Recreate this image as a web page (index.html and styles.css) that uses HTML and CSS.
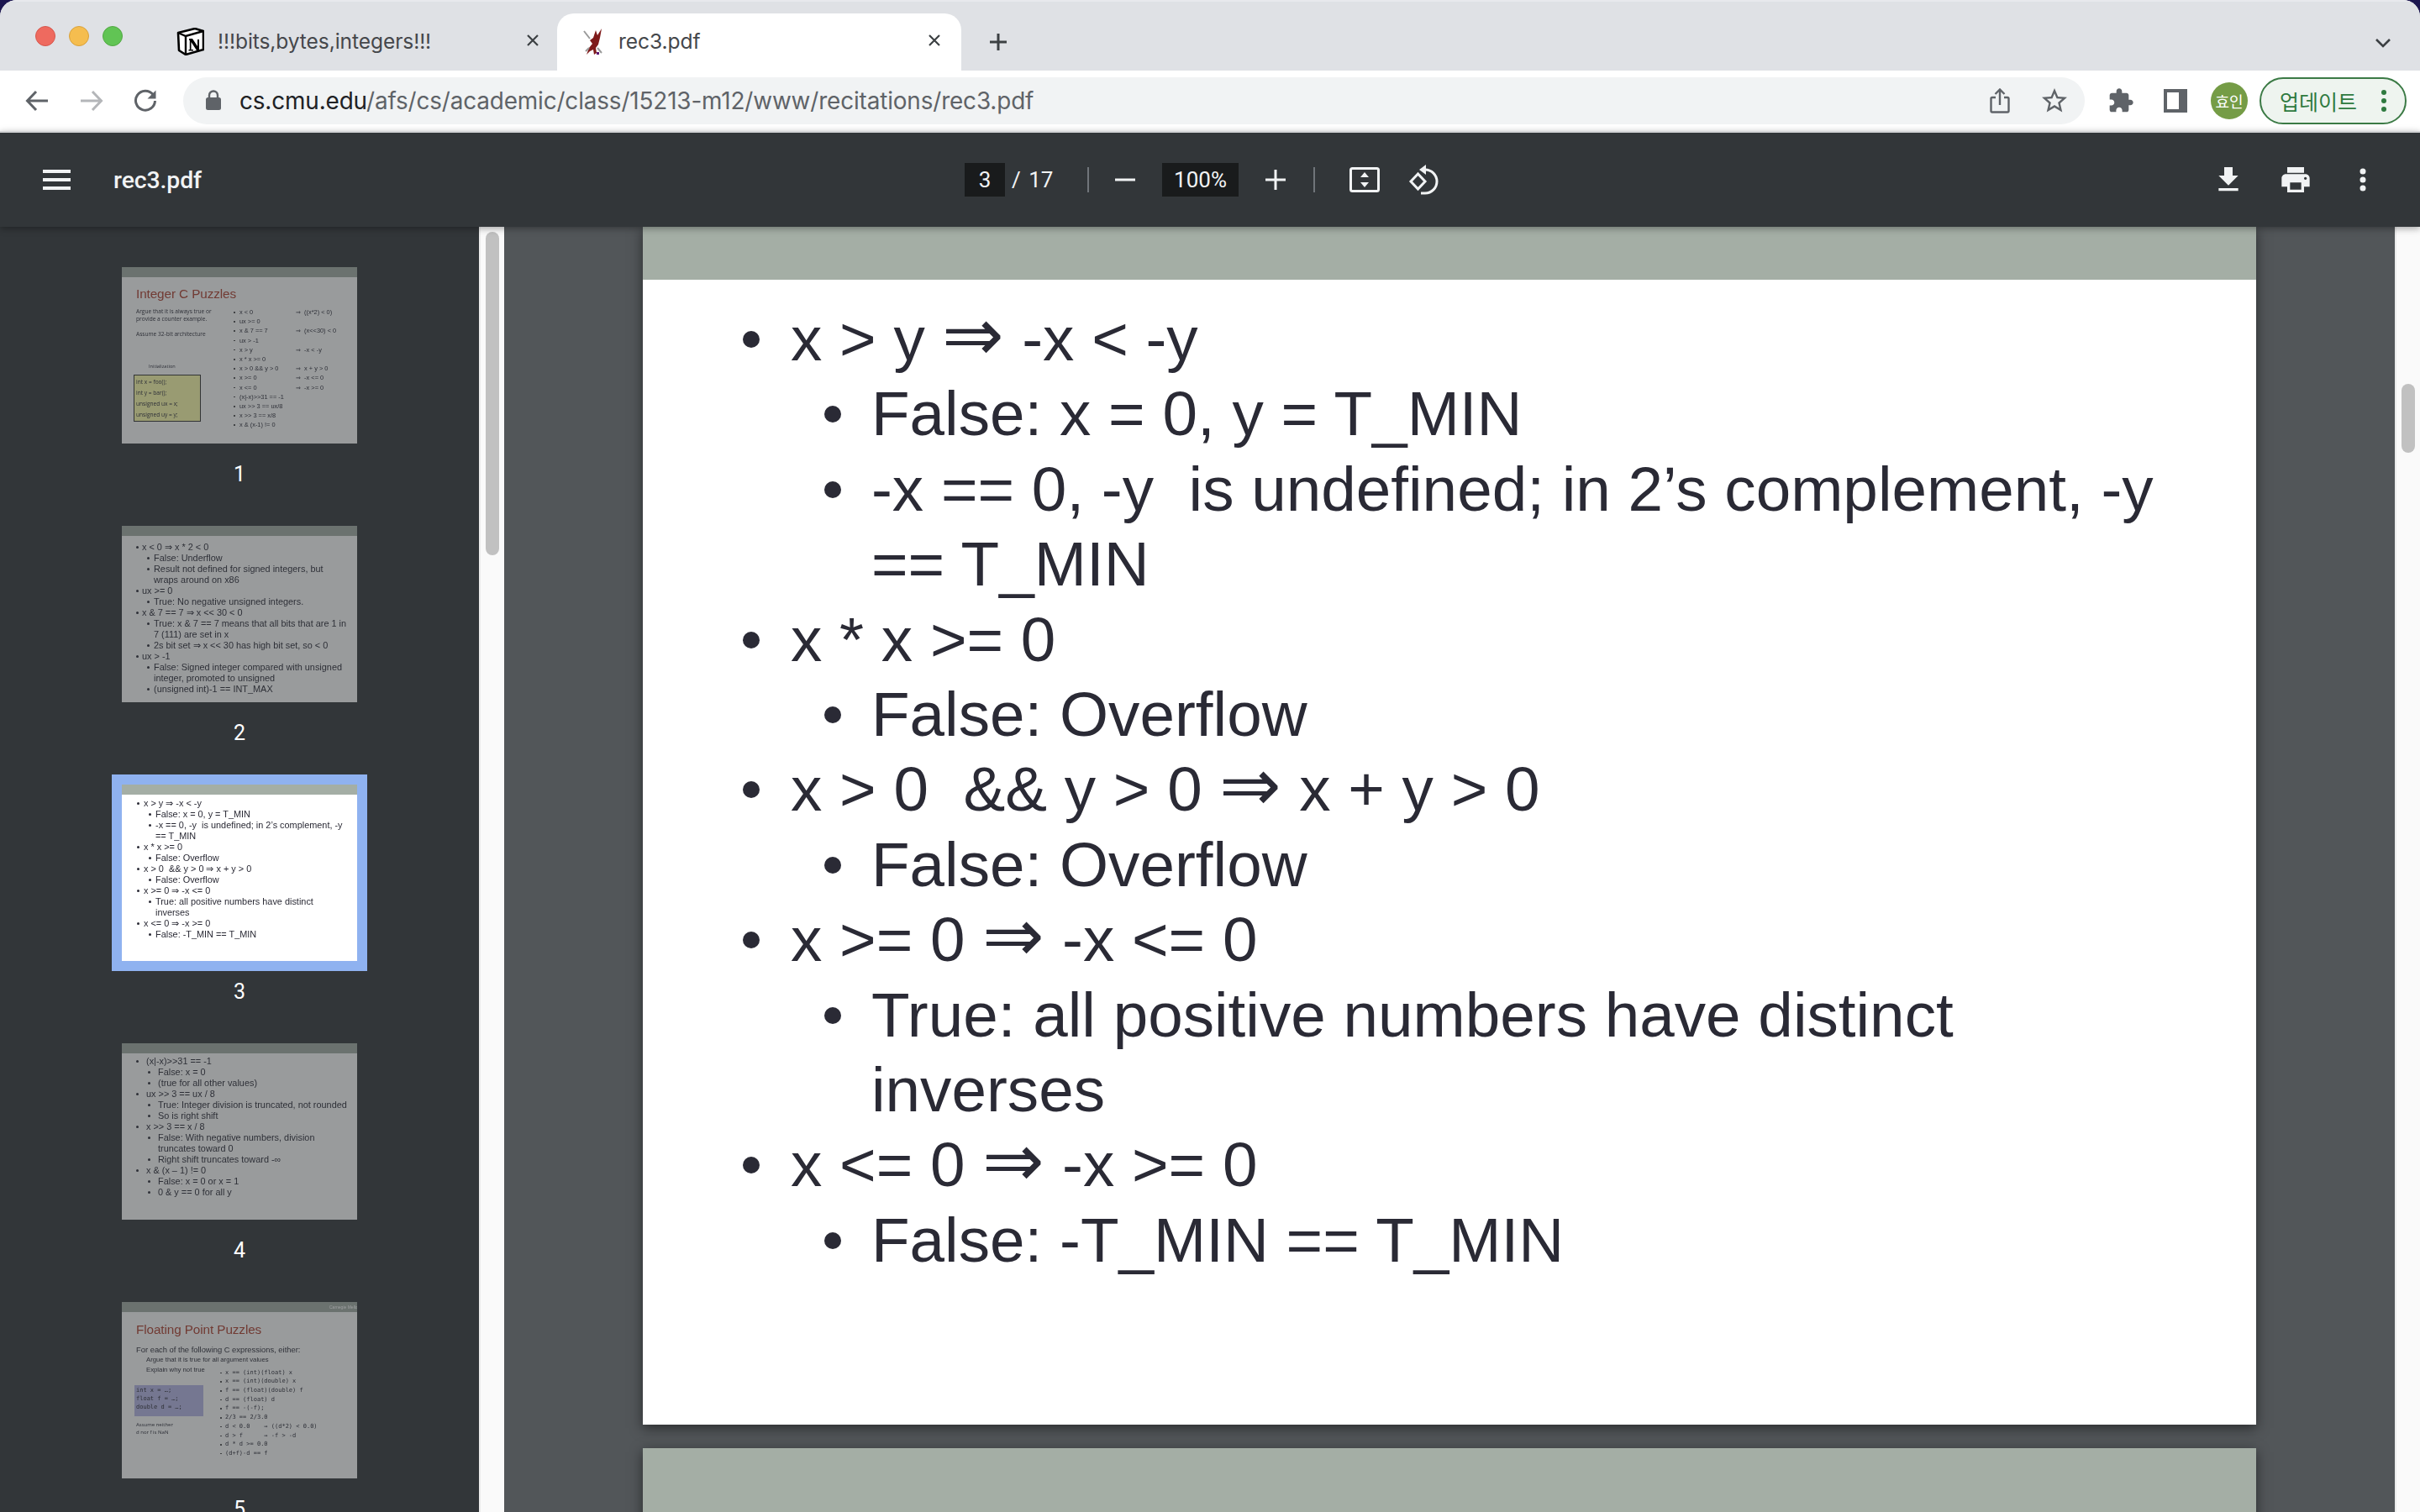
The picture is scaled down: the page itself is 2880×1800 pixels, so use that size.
FILE: index.html
```html
<!DOCTYPE html>
<html lang="en">
<head>
<meta charset="utf-8">
<title>rec3.pdf</title>
<link rel="stylesheet" href="styles.css">
</head>
<body>
<div class="window">
  <div class="tabstrip">
    <div class="lights"><i class="light red"></i><i class="light yellow"></i><i class="light green"></i></div>
    <div class="tab">
      <svg class="fav" viewBox="0 0 33 33"><path d="M2 6 L22 1 L32 4 L32 26 L11 32 L3 27 Z" fill="#fff" stroke="#000" stroke-width="2.6" stroke-linejoin="round"/><path d="M2 6 L11 10 L32 4 M11 10 L11 32" fill="none" stroke="#000" stroke-width="2.4"/><path d="M15 13 H19 L25 22 V14 H27 V27 H24 L17.5 17 V26 H20 V27.5 H14.5 V26 H15.8 V15 H15 Z" fill="#000"/></svg>
      <span class="tab-title">!!!bits,bytes,integers!!!</span>
      <svg class="tab-x" viewBox="0 0 16 16"><path d="M2 2 L14 14 M14 2 L2 14" stroke="#3c4043" stroke-width="2.2" fill="none"/></svg>
    </div>
    <div class="tab active">
      <svg class="griffin" viewBox="0 0 26 33"><path d="M5 32 L8 24 L12 19 L9 15 L13 12 L16 3 L18 9 L23 1 L21 12 L19 20 L16 24 L17 30 L14 32 L13 26 L9 28 Z" fill="#7e1a1a"/><path d="M2 4 L9 13 M4 28 L8 24 M18 24 L23 30" stroke="#9a9a9a" stroke-width="2" fill="none"/><path d="M17 29 h3 v3 h-3z" fill="#5a1170"/></svg>
      <span class="tab-title">rec3.pdf</span>
      <svg class="tab-x" viewBox="0 0 16 16"><path d="M2 2 L14 14 M14 2 L2 14" stroke="#3c4043" stroke-width="2.2" fill="none"/></svg>
    </div>
    <svg class="newtab" viewBox="0 0 24 24"><path d="M12 2 V22 M2 12 H22" stroke="#3c4043" stroke-width="3" fill="none"/></svg>
    <svg class="chev" viewBox="0 0 20 12"><path d="M2 2 L10 10 L18 2" stroke="#3c4043" stroke-width="2.6" fill="none"/></svg>
  </div>

  <div class="toolbar">
    <svg class="nav back" viewBox="0 0 28 28"><path d="M27 14 H3 M13 3 L2.5 14 L13 25" stroke="#5f6368" stroke-width="3" fill="none"/></svg>
    <svg class="nav fwd" viewBox="0 0 28 28"><path d="M1 14 H25 M15 3 L25.5 14 L15 25" stroke="#b4b6b9" stroke-width="3" fill="none"/></svg>
    <svg class="nav reload" viewBox="0 0 28 28"><path d="M23 6.5 A11.5 11.5 0 1 0 25.5 14" stroke="#5f6368" stroke-width="3" fill="none"/><path d="M26.5 1.5 V11.5 H16.5 Z" fill="#5f6368"/></svg>
    <div class="omnibox">
      <svg class="lock" viewBox="0 0 20 24"><path d="M5 10 V6.5 a5 5 0 0 1 10 0 V10" stroke="#5f6368" stroke-width="2.4" fill="none"/><rect x="1" y="9" width="18" height="15" rx="2.5" fill="#5f6368"/></svg>
      <span class="url"><b>cs.cmu.edu</b>/afs/cs/academic/class/15213-m12/www/recitations/rec3.pdf</span>
      <svg class="share" viewBox="0 0 24 30"><path d="M7 11 H3 a1.5 1.5 0 0 0 -1.5 1.5 V27 a1.5 1.5 0 0 0 1.5 1.5 H21 a1.5 1.5 0 0 0 1.5 -1.5 V12.5 A1.5 1.5 0 0 0 21 11 H17 M12 20 V2 M6.5 7 L12 1.5 L17.5 7" stroke="#5f6368" stroke-width="2.4" fill="none"/></svg>
      <svg class="star" viewBox="0 0 24 24"><path fill="#5f6368" d="M22 9.24l-7.19-.62L12 2 9.19 8.63 2 9.24l5.46 4.73L5.82 21 12 17.27 18.18 21l-1.63-7.03L22 9.24zM12 15.4l-3.76 2.27 1-4.28-3.32-2.88 4.38-.38L12 6.1l1.71 4.04 4.38.38-3.32 2.88 1 4.28L12 15.4z"/></svg>
    </div>
    <svg class="puzzle" viewBox="0 0 24 24"><path fill="#5f6368" d="M20.5 11H19V7c0-1.1-.9-2-2-2h-4V3.5C13 2.12 11.88 1 10.5 1S8 2.12 8 3.5V5H4c-1.1 0-1.99.9-1.99 2v3.8H3.5c1.49 0 2.7 1.21 2.7 2.7s-1.21 2.7-2.7 2.7H2V20c0 1.1.9 2 2 2h3.8v-1.5c0-1.49 1.21-2.7 2.7-2.7 1.49 0 2.7 1.21 2.7 2.7V22H17c1.1 0 2-.9 2-2v-4h1.5c1.38 0 2.5-1.12 2.5-2.5S21.88 11 20.5 11z"/></svg>
    <svg class="panel" viewBox="0 0 28 28"><path d="M0 0 H28 V28 H0 Z M4 4 V24 H18 V4 Z" fill="#5f6368" fill-rule="evenodd"/></svg>
    <div class="avatar">효인</div>
    <div class="update"><span>업데이트</span><svg class="update-dots" viewBox="0 0 8 28"><circle cx="4" cy="4" r="3" fill="#2f7a3f"/><circle cx="4" cy="14" r="3" fill="#2f7a3f"/><circle cx="4" cy="24" r="3" fill="#2f7a3f"/></svg></div>
  </div>

  <div class="pdfbar">
    <div class="pdf-left">
      <svg class="burger" viewBox="0 0 33 24"><path d="M0 0 H33 V4 H0 Z M0 10 H33 V14 H0 Z M0 20 H33 V24 H0 Z" fill="#f1f3f4"/></svg>
      <span class="pdf-title">rec3.pdf</span>
    </div>
    <div class="pdf-center">
      <span class="field pagefield">3</span>
      <span class="pagecount">/ 17</span>
      <i class="vsep first"></i>
      <svg class="zoombtn minus" viewBox="0 0 24 24"><path d="M0 12 H24" stroke="#f1f3f4" stroke-width="3" fill="none"/></svg>
      <span class="field zoomfield">100%</span>
      <svg class="zoombtn plus" viewBox="0 0 24 24"><path d="M0 12 H24 M12 0 V24" stroke="#f1f3f4" stroke-width="3" fill="none"/></svg>
      <i class="vsep second"></i>
      <svg class="fit" viewBox="0 0 36 30"><rect x="1.5" y="1.5" width="33" height="27" rx="2" stroke="#f1f3f4" stroke-width="3" fill="none"/><path d="M18 6 L23 12 H13 Z M18 24 L23 18 H13 Z" fill="#f1f3f4"/></svg>
      <svg class="rotate" viewBox="0 0 36 36"><path d="M11.5 11 L3 20 L11.5 29 L20 20 Z" stroke="#f1f3f4" stroke-width="3" fill="none"/><path d="M17 6 H20 A14 14 0 0 1 20 34 H15" stroke="#f1f3f4" stroke-width="3" fill="none"/><path d="M21 0 V12 L13 6 Z" fill="#f1f3f4"/></svg>
    </div>
    <div class="pdf-right">
      <svg class="act" viewBox="0 0 24 24"><path fill="#f1f3f4" d="M19 9h-4V3H9v6H5l7 7 7-7zM5 18v2h14v-2H5z"/></svg>
      <svg class="act" viewBox="0 0 24 24"><path fill="#f1f3f4" d="M19 8H5c-1.66 0-3 1.34-3 3v6h4v4h12v-4h4v-6c0-1.66-1.34-3-3-3zm-3 11H8v-5h8v5zm3-7c-.55 0-1-.45-1-1s.45-1 1-1 1 .45 1 1-.44 1-1 1zm-1-9H6v4h12V3z"/></svg>
      <svg class="act" viewBox="0 0 24 24"><circle cx="12" cy="6" r="2.1" fill="#f1f3f4"/><circle cx="12" cy="12" r="2.1" fill="#f1f3f4"/><circle cx="12" cy="18" r="2.1" fill="#f1f3f4"/></svg>
    </div>
  </div>

  <div class="content">
    <aside class="sidebar">
      <div class="thumb-item">
        <div class="slide dim">
          <div class="sband"></div>
          <div class="s1">
            <div class="stitle">Integer C Puzzles</div>
            <div class="s1-cols">
              <div class="s1-left">
                <p>Argue that it is always true or<br>provide a counter example.</p>
                <p class="mt">Assume 32-bit architecture</p>
                <p class="init">Initialization</p>
                <div class="codebox">
                  <span>int x = foo();</span><span>int y = bar();</span><span>unsigned ux = x;</span><span>unsigned uy = y;</span>
                </div>
              </div>
              <div class="s1-right">
                <div class="p"><span>x &lt; 0</span><span>⇒&nbsp;&nbsp;((x*2) &lt; 0)</span></div>
                <div class="p"><span>ux &gt;= 0</span></div>
                <div class="p"><span>x &amp; 7 == 7</span><span>⇒&nbsp;&nbsp;(x&lt;&lt;30) &lt; 0</span></div>
                <div class="p"><span>ux &gt; -1</span></div>
                <div class="p"><span>x &gt; y</span><span>⇒&nbsp;&nbsp;-x &lt; -y</span></div>
                <div class="p"><span>x * x &gt;= 0</span></div>
                <div class="p"><span>x &gt; 0 &amp;&amp; y &gt; 0</span><span>⇒&nbsp;&nbsp;x + y &gt; 0</span></div>
                <div class="p"><span>x &gt;= 0</span><span>⇒&nbsp;&nbsp;-x &lt;= 0</span></div>
                <div class="p"><span>x &lt;= 0</span><span>⇒&nbsp;&nbsp;-x &gt;= 0</span></div>
                <div class="p"><span>(x|-x)&gt;&gt;31 == -1</span></div>
                <div class="p"><span>ux &gt;&gt; 3 == ux/8</span></div>
                <div class="p"><span>x &gt;&gt; 3 == x/8</span></div>
                <div class="p"><span>x &amp; (x-1) != 0</span></div>
              </div>
            </div>
          </div>
        </div>
        <div class="thumb-label">1</div>
      </div>

      <div class="thumb-item">
        <div class="slide dim">
          <div class="sband"></div>
          <div class="tlist t2">
            <div class="tb1">x &lt; 0 ⇒ x * 2 &lt; 0</div>
            <div class="tb2">False: Underflow</div>
            <div class="tb2">Result not defined for signed integers, but wraps around on x86</div>
            <div class="tb1">ux &gt;= 0</div>
            <div class="tb2">True: No negative unsigned integers.</div>
            <div class="tb1">x &amp; 7 == 7 ⇒ x &lt;&lt; 30 &lt; 0</div>
            <div class="tb2">True: x &amp; 7 == 7 means that all bits that are 1 in 7 (111) are set in x</div>
            <div class="tb2">2s bit set ⇒ x &lt;&lt; 30 has high bit set, so &lt; 0</div>
            <div class="tb1">ux &gt; -1</div>
            <div class="tb2">False: Signed integer compared with unsigned integer, promoted to unsigned</div>
            <div class="tb2">(unsigned int)-1 == INT_MAX</div>
          </div>
        </div>
        <div class="thumb-label">2</div>
      </div>

      <div class="thumb-item">
        <div class="slide selected">
          <div class="sband"></div>
          <div class="tlist t3">
            <div class="tb1">x &gt; y ⇒ -x &lt; -y</div>
            <div class="tb2">False: x = 0, y = T_MIN</div>
            <div class="tb2">-x == 0, -y  is undefined; in 2’s complement, -y == T_MIN</div>
            <div class="tb1">x * x &gt;= 0</div>
            <div class="tb2">False: Overflow</div>
            <div class="tb1">x &gt; 0  &amp;&amp; y &gt; 0 ⇒ x + y &gt; 0</div>
            <div class="tb2">False: Overflow</div>
            <div class="tb1">x &gt;= 0 ⇒ -x &lt;= 0</div>
            <div class="tb2">True: all positive numbers have distinct inverses</div>
            <div class="tb1">x &lt;= 0 ⇒ -x &gt;= 0</div>
            <div class="tb2">False: -T_MIN == T_MIN</div>
          </div>
        </div>
        <div class="thumb-label">3</div>
      </div>

      <div class="thumb-item">
        <div class="slide dim">
          <div class="sband"></div>
          <div class="tlist t4">
            <div class="tb1">(x|-x)&gt;&gt;31 == -1</div>
            <div class="tb2">False: x = 0</div>
            <div class="tb2">(true for all other values)</div>
            <div class="tb1">ux &gt;&gt; 3 == ux / 8</div>
            <div class="tb2">True: Integer division is truncated, not rounded</div>
            <div class="tb2">So is right shift</div>
            <div class="tb1">x &gt;&gt; 3 == x / 8</div>
            <div class="tb2">False: With negative numbers, division truncates toward 0</div>
            <div class="tb2">Right shift truncates toward -∞</div>
            <div class="tb1">x &amp; (x – 1) != 0</div>
            <div class="tb2">False: x = 0 or x = 1</div>
            <div class="tb2">0 &amp; y == 0 for all y</div>
          </div>
        </div>
        <div class="thumb-label">4</div>
      </div>

      <div class="thumb-item">
        <div class="slide dim">
          <div class="sband band5"><span>Carnegie Mellon</span></div>
          <div class="s5">
            <div class="stitle">Floating Point Puzzles</div>
            <div class="s5-lead">For each of the following C expressions, either:</div>
            <div class="s5-sub">Argue that it is true for all argument values</div>
            <div class="s5-sub">Explain why not true</div>
            <div class="s5-cols">
              <div class="s5-left">
                <div class="fbox"><span>int x = …;</span><span>float f = …;</span><span>double d = …;</span></div>
                <p>Assume neither<br>d nor f is NaN</p>
              </div>
              <div class="s5-right">
                <span>x == (int)(float) x</span><span>x == (int)(double) x</span><span>f == (float)(double) f</span><span>d == (float) d</span><span>f == -(-f);</span><span>2/3 == 2/3.0</span><span>d &lt; 0.0    ⇒ ((d*2) &lt; 0.0)</span><span>d &gt; f      ⇒ -f &gt; -d</span><span>d * d &gt;= 0.0</span><span>(d+f)-d == f</span>
              </div>
            </div>
          </div>
        </div>
        <div class="thumb-label">5</div>
      </div>
    </aside>
    <div class="sbar left-sbar"><i class="sthumb"></i></div>
    <main class="viewer">
      <div class="page">
        <div class="band"></div>
        <div class="bullets">
          <div class="b1">x &gt; y <span class="ar">⇒</span> -x &lt; -y</div>
          <div class="b2">False: x = 0, y = T_MIN</div>
          <div class="b2">-x == 0, -y  is undefined; in 2’s complement, -y == T_MIN</div>
          <div class="b1">x * x &gt;= 0</div>
          <div class="b2">False: Overflow</div>
          <div class="b1">x &gt; 0  &amp;&amp; y &gt; 0 <span class="ar">⇒</span> x + y &gt; 0</div>
          <div class="b2">False: Overflow</div>
          <div class="b1">x &gt;= 0 <span class="ar">⇒</span> -x &lt;= 0</div>
          <div class="b2">True: all positive numbers have distinct inverses</div>
          <div class="b1">x &lt;= 0 <span class="ar">⇒</span> -x &gt;= 0</div>
          <div class="b2">False: -T_MIN == T_MIN</div>
        </div>
      </div>
      <div class="page next"><div class="nextband"></div></div>
    </main>
    <div class="sbar right-sbar"><i class="sthumb"></i></div>
  </div>
</div>
</body>
</html>
```

FILE: styles.css
```css
* { box-sizing: border-box; }
html, body { margin: 0; padding: 0; }
body { width: 2880px; height: 1800px; overflow: hidden; background: #1c1650; font-family: "Liberation Sans", Arial, sans-serif; }
p { margin: 0; }
svg { display: block; flex: none; }

.window { width: 2880px; height: 1800px; display: flex; flex-direction: column; border-radius: 20px 20px 0 0; overflow: hidden; background: #dfe1e5; }

/* tab strip */
.tabstrip { height: 84px; flex: none; display: flex; align-items: flex-start; background: #dfe1e5; border-top: 2px solid #e8e9ed; position: relative; }
.lights { display: flex; gap: 16px; margin: 29px 0 0 42px; width: 168px; }
.light { width: 24px; height: 24px; border-radius: 50%; }
.red { background: #ee6a5f; border: 1px solid #d6574d; }
.yellow { background: #f5bd4f; border: 1px solid #d8a13c; }
.green { background: #61c454; border: 1px solid #52a843; }
.tab { width: 453px; height: 68px; margin-top: 14px; display: flex; align-items: center; position: relative; }
.tab.active { width: 481px; background: #fff; border-radius: 20px 20px 0 0; padding-left: 30px; }
.fav { width: 33px; height: 33px; margin-right: 16px; margin-top: -1px; }
.griffin { width: 26px; height: 33px; margin-right: 17px; margin-top: -1px; }
.tab-title { font-family: "Inter", "Liberation Sans", sans-serif; font-size: 24.6px; color: #45474b; white-space: nowrap; flex: 1; margin-top: -3px; letter-spacing: -0.1px; }
.tab-x { width: 16px; height: 16px; margin-top: -4px; margin-right: 21px; }
.tab.active .tab-x { margin-right: 24px; }
.newtab { width: 24px; height: 24px; margin: 36px 0 0 32px; }
.chev { width: 20px; height: 12px; position: absolute; right: 34px; top: 43px; }

/* toolbar */
.toolbar { height: 72px; flex: none; background: #fff; display: flex; align-items: center; }
.nav { width: 28px; height: 28px; }
.back { margin-left: 30px; }
.fwd { margin-left: 37px; }
.reload { margin-left: 36px; }
.omnibox { height: 56px; width: 2263px; margin-left: 31px; background: #f1f3f4; border-radius: 28px; display: flex; align-items: center; padding-left: 26px; }
.lock { width: 20px; height: 24px; margin-top: -2px; }
.url { font-family: "Inter", "Liberation Sans", sans-serif; font-size: 27.9px; letter-spacing: -0.15px; color: #5f6368; margin-left: 21px; white-space: nowrap; flex: 1; }
.url b { font-weight: 400; color: #202124; }
.share { width: 24px; height: 30px; margin-right: 35px; }
.star { width: 36px; height: 36px; margin-right: 18px; }
.puzzle { width: 32px; height: 32px; margin-left: 27px; }
.panel { width: 28px; height: 28px; margin-left: 35px; }
.avatar { width: 44px; height: 44px; border-radius: 50%; background: #759c46; color: #fff; margin-left: 28px; font: 18px/44px "Noto Sans CJK KR", sans-serif; text-align: center; white-space: nowrap; }
.update { width: 175px; height: 56px; margin-left: 14px; border: 2.5px solid #3b7a45; border-radius: 28px; background: #eef4ef; display: flex; align-items: center; padding-left: 22px; color: #2f7a3f; font: 25px "Noto Sans CJK KR", sans-serif; white-space: nowrap; }
.update-dots { width: 8px; height: 28px; margin-left: auto; margin-right: 21px; }

/* pdf toolbar */
.pdfbar { height: 114px; flex: none; background: #323639; border-top: 2px solid #d3d4d6; display: grid; grid-template-columns: 1148px 1fr auto; align-items: center; position: relative; z-index: 2; box-shadow: 0 2px 8px rgba(0,0,0,.35); color: #f1f3f4; }
.pdf-left { display: flex; align-items: center; padding-left: 51px; }
.burger { width: 33px; height: 24px; }
.pdf-title { margin-left: 51px; font: 500 28.4px "Roboto", sans-serif; letter-spacing: -.1px; }
.pdf-center { display: flex; align-items: center; }
.field { background: #191b1c; height: 40px; display: flex; align-items: center; justify-content: center; font: 26px "Roboto", sans-serif; }
.pagefield { width: 48px; }
.pagecount { font: 26px "Roboto", sans-serif; margin-left: 8px; width: 90px; word-spacing: 3px; }
.vsep { width: 2px; height: 30px; background: #70757a; }
.zoombtn { width: 24px; height: 24px; }
.minus { margin-left: 31px; }
.zoomfield { width: 91px; margin-left: 32px; }
.plus { margin-left: 32px; }
.vsep.second { margin-left: 33px; }
.fit { width: 36px; height: 30px; margin-left: 41px; }
.rotate { width: 36px; height: 36px; margin-left: 34px; }
.pdf-right { display: flex; align-items: center; gap: 40px; padding-right: 48px; }
.act { width: 40px; height: 40px; }

/* content */
.content { flex: 1; min-height: 0; display: flex; background: #525659; overflow: hidden; }
.sidebar { width: 570px; flex: none; background: #323639; padding-top: 48px; overflow: hidden; }
.thumb-item { height: 308px; width: 280px; margin-left: 145px; }
.slide { width: 280px; height: 210px; background: #fff; overflow: hidden; font-size: 10.9px; line-height: 13px; color: #2a2a35; }
.slide.dim { opacity: .5; }
.slide.selected { outline: 12px solid #8fb2f0; }
.slide > * { filter: blur(.45px); }
.thumb-label { margin-top: 19px; color: #fff; text-align: center; font: 25px/36px "Roboto", sans-serif; }
.sband { height: 12px; background: #a4aea5; position: relative; overflow: hidden; }
.band5 span { position: absolute; left: 247px; top: 2px; font-size: 5px; line-height: 8px; color: #fff; white-space: nowrap; }

.tb1, .tb2 { position: relative; white-space: pre-wrap; }
.tb1::before, .tb2::before { content: ""; position: absolute; top: 5px; width: 3px; height: 3px; border-radius: 50%; background: #2a2a35; }
.t2 { padding: 7px 12px 0 0; }
.t2 .tb1 { padding-left: 24px; }
.t2 .tb1::before { left: 17px; }
.t2 .tb2 { padding-left: 38px; }
.t2 .tb2::before { left: 30px; }
.t3 { padding: 3.5px 12px 0 0; }
.t3 .tb1 { padding-left: 26px; }
.t3 .tb1::before { left: 18px; }
.t3 .tb2 { padding-left: 40px; }
.t3 .tb2::before { left: 32px; }
.t4 { padding: 3px 10px 0 0; }
.t4 .tb1 { padding-left: 29px; }
.t4 .tb1::before { left: 17px; }
.t4 .tb2 { padding-left: 43px; }
.t4 .tb2::before { left: 31px; }

.stitle { font-size: 15.3px; line-height: 20px; color: #b0402f; letter-spacing: -.1px; }
.s1 { padding: 10px 0 0 17px; }
.s1-cols { display: grid; grid-template-columns: 115px 1fr; margin-top: 6px; }
.s1-left { font: 6.6px/9px "Open Sans", sans-serif; }
.s1-left .mt { margin-top: 9px; }
.s1-left .init { margin-top: 29px; font-size: 5.6px; padding-left: 15px; line-height: 10px; }
.codebox { width: 80px; height: 56px; margin: 5px 0 0 -3px; background: #ffffac; border: 1.5px solid #333; padding: 1px 2px; display: flex; flex-direction: column; justify-content: space-around; }
.s1-right { font: 7.4px/11.2px "Liberation Sans", sans-serif; }
.p { display: grid; grid-template-columns: 67px 1fr; padding-left: 8px; position: relative; }
.p::before { content: ""; position: absolute; left: 1px; top: 5px; width: 1.5px; height: 1.5px; background: #333; border-radius: 50%; }

.s5 { padding: 11px 0 0 17px; }
.s5-lead { font-size: 9.4px; line-height: 12px; margin-top: 8px; }
.s5-sub { font-size: 7.75px; line-height: 11.8px; padding-left: 12px; }
.s5-cols { display: grid; grid-template-columns: 106px 1fr; margin-top: -8px; }
.s5-left { padding-top: 20px; }
.fbox { width: 82px; height: 37px; margin-left: -2px; background: #b8b8e8; padding: 1px 2px; font: 7px/10px "DejaVu Sans Mono", monospace; display: flex; flex-direction: column; }
.s5-left p { font: 6px/9px "Open Sans", sans-serif; margin-top: 6px; }
.s5-right { font: 7px/10.7px "DejaVu Sans Mono", monospace; display: flex; flex-direction: column; white-space: pre; }
.s5-right span { position: relative; }
.s5-right span::before { content: ""; position: absolute; left: -6px; top: 5px; width: 1.5px; height: 1.5px; background: #333; border-radius: 50%; }

/* scrollbars */
.sbar { width: 30px; flex: none; background: #fafafa; border-left: 2px solid #ececec; position: relative; }
.sthumb { position: absolute; width: 16px; background: #c1c1c1; border-radius: 8px; }
.left-sbar .sthumb { left: 6px; top: 6px; height: 385px; }
.right-sbar .sthumb { left: 6px; top: 187px; height: 82px; }

/* viewer */
.viewer { flex: 1; min-width: 0; padding-left: 165px; overflow: hidden; }
.page { width: 1920px; height: 1426px; background: #fff; box-shadow: 0 4px 14px rgba(0,0,0,.5); }
.band { height: 63px; background: #a4aea5; }
.nextband { height: 100px; background: #a4aea5; }
.page.next { margin-top: 28px; height: 100px; }
.bullets { padding: 26px 95px 0 0; font-size: 74.67px; line-height: 89.4px; color: #2a2a35; }
.b1, .b2 { position: relative; white-space: pre-wrap; }
.b1::before, .b2::before { content: ""; position: absolute; top: 35px; width: 20px; height: 20px; border-radius: 50%; background: #2a2a35; }
.b1 { padding-left: 176px; }
.b1::before { left: 119px; }
.b2 { padding-left: 272px; }
.b2::before { left: 216px; }
.ar { font-size: 88px; line-height: 0; }
```
